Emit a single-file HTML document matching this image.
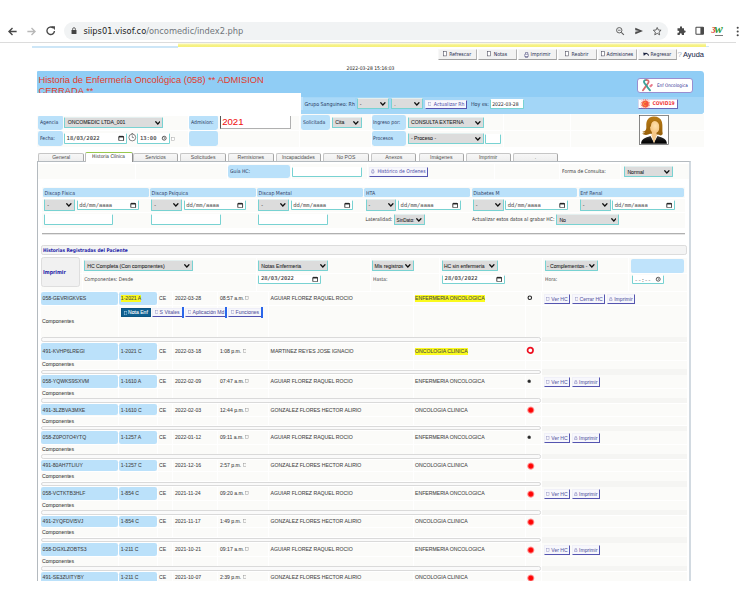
<!DOCTYPE html>
<html lang="es">
<head>
<meta charset="utf-8">
<title>Historia de Enfermería Oncológica</title>
<style>
html,body{margin:0;padding:0;background:#fff;}
body{width:750px;height:600px;overflow:hidden;position:relative;}
#pg{position:absolute;left:0;top:0;width:750px;height:600px;overflow:hidden;background:#fff;}
#pg div,#pg span,#pg svg{position:absolute;box-sizing:border-box;}
#pg span{white-space:pre;}
.dv{font-family:"DejaVu Sans","Liberation Sans",sans-serif;transform:scaleY(1.15);transform-origin:0 72%;}
.ls{font-family:"Liberation Sans",sans-serif;-webkit-text-stroke:0.06px;}
.mo{font-family:"DejaVu Sans Mono","Liberation Mono",monospace;-webkit-text-stroke:0.08px;}
.sel{background:#dcdcdc;border:1px solid #78d2d2;border-top-color:#e4efef;border-radius:1px;overflow:hidden;}
.inp{background:#fff;border:1px solid #78d2d2;border-top-color:transparent;border-radius:1px;overflow:hidden;}
.chev{right:1.9px;top:50%;width:5.7px;height:3.9px;margin-top:-1.7px;}
.cal{right:1.6px;top:50%;width:6.4px;height:6.4px;margin-top:-3.5px;}
.pbtn{background:#f7f7fc;border:1px solid #f0f0f8;border-right:1.1px solid #5555b0;border-bottom:1.1px solid #5555b0;}
.bbtn{background:#f6f6fb;border:1px solid #eeeef8;border-right:1.7px solid #2a68e6;border-bottom:1px solid #5050b0;}
.gbtn{background:#f2f2f2;border:1px solid #f8f8f8;border-right:1px solid #b4b4b4;border-bottom:1.3px solid #a0a0a0;}
.tab{background:linear-gradient(#f7f7f7,#ededed);border:1px solid #c6c6c6;border-right-color:#a6a6a6;border-bottom:none;border-radius:2px 2px 0 0;}
.cell{background:#fbfbf9;}
</style>
</head>
<body>
<div id="pg">
<div style="left:64.00px;top:21.60px;width:604.00px;height:18.60px;background:#f1f3f4;border-radius:9.3px"></div>
<div style="left:0.00px;top:42.00px;width:736.00px;height:1.00px;background:#dcdcdc"></div>
<svg style="left:7.4px;top:25.5px;width:11px;height:11px" viewBox="0 0 20 20"><path d="M17.5 10H4M10 3.6L3.6 10L10 16.4" fill="none" stroke="#474747" stroke-width="2.5"/></svg>
<svg style="left:26px;top:25.5px;width:11px;height:11px" viewBox="0 0 20 20"><path d="M2.5 10H16M10 3.6L16.4 10L10 16.4" fill="none" stroke="#b8b8b8" stroke-width="2.5"/></svg>
<svg style="left:44.6px;top:25.2px;width:11.4px;height:11.4px" viewBox="0 0 20 20"><path d="M16.6 10.6A6.6 6.6 0 1 1 14.2 5" fill="none" stroke="#474747" stroke-width="2.4"/><path d="M11 2.2H17.4V8.6Z" fill="#474747"/></svg>
<svg style="left:71px;top:27px;width:6px;height:7.4px" viewBox="0 0 12 15"><rect x="1" y="6" width="10" height="8.4" rx="1" fill="#444"/><path d="M3.2 6V4.2a2.8 2.8 0 0 1 5.6 0V6" fill="none" stroke="#444" stroke-width="1.6"/></svg>
<span class="dv" style="-webkit-text-stroke:0;transform:none;left:83.4px;top:26.1px;font-size:8.29px;line-height:11px;color:#222">siips01.visof.co<span style="position:static;color:#70757a">/oncomedic/index2.php</span></span>
<svg style="left:615px;top:26px;width:10px;height:10px" viewBox="0 0 20 20"><circle cx="8.5" cy="8.5" r="5.4" fill="none" stroke="#5c5c5c" stroke-width="1.9"/><path d="M12.6 12.6L17.8 17.8" stroke="#5c5c5c" stroke-width="2.2"/><path d="M5.8 8.5H11.2" stroke="#5c5c5c" stroke-width="1.6"/></svg>
<svg style="left:633.6px;top:26px;width:10px;height:10px" viewBox="0 0 20 20"><path d="M2.5 3.5L18 10L2.5 16.5L2.5 11.6L10.5 10L2.5 8.4Z" fill="#4a4a4a"/></svg>
<svg style="left:652.4px;top:25.6px;width:10.4px;height:10.4px" viewBox="0 0 20 20"><path d="M10 2.8L12.2 7.7L17.5 8.2L13.5 11.8L14.7 17L10 14.2L5.3 17L6.5 11.8L2.5 8.2L7.8 7.7Z" fill="none" stroke="#4a4a4a" stroke-width="1.6" stroke-linejoin="round"/></svg>
<svg style="left:676.4px;top:26px;width:10px;height:10px" viewBox="0 0 20 20"><path d="M8 2.5a2 2 0 0 1 4 0V4.5H16V9h1.2a2.2 2.2 0 0 1 0 4.4H16V18H11.6V16.6a2 2 0 0 0-4 0V18H3V13.4H4.4a2 2 0 0 0 0-4H3V4.5H8Z" fill="#4a4a4a"/></svg>
<svg style="left:694.6px;top:26.4px;width:9.4px;height:9.4px" viewBox="0 0 20 20"><rect x="2" y="2.5" width="16" height="15" rx="1" fill="none" stroke="#4a4a4a" stroke-width="2.2"/><rect x="11.5" y="2.5" width="6.5" height="15" fill="#4a4a4a"/></svg>
<span style="left:711.4px;top:22.6px;font-family:'Liberation Serif',serif;font-style:italic;font-weight:bold;font-size:8px;line-height:12px;color:#d8302c">3<span style="position:static;font-size:12.4px;color:#2f9a3c;margin-left:-0.8px">w</span></span>
<div style="left:714.80px;top:34.60px;width:8.00px;height:0.90px;background:#7a7a7a"></div>
<svg style="left:735.6px;top:25.6px;width:3.4px;height:11px" viewBox="0 0 6.8 22"><circle cx="3.4" cy="3.4" r="2.1" fill="#474747"/><circle cx="3.4" cy="11" r="2.1" fill="#474747"/><circle cx="3.4" cy="18.6" r="2.1" fill="#474747"/></svg>
<div style="left:32.00px;top:46.20px;width:146.00px;height:1.50px;background:#cde6f7"></div>
<div style="left:177.60px;top:42.80px;width:528.60px;height:4.60px;background:linear-gradient(#fdfde6,#fbf9c4 26%,#f6f288 44%,#f5f07a)"></div>
<div style="left:706.00px;top:46.00px;width:3.40px;height:1.40px;background:#cfe6f6"></div>
<div class="gbtn" style="left:438px;top:48.8px;width:38.6px;height:10.8px;"><svg style="left:4.2px;top:1.6px;width:4px;height:5.4px" viewBox="0 0 8 11"><rect x="1" y="1" width="6" height="9" fill="#fff" stroke="#445" stroke-width="1.1"/></svg><span class="dv" style="left:10.2px;top:0;line-height:10.6px;font-size:4.65px;color:#1c2b4d">Refrescar</span></div>
<div class="gbtn" style="left:478px;top:48.8px;width:38.6px;height:10.8px;"><svg style="left:8.4px;top:1.6px;width:4px;height:5.4px" viewBox="0 0 8 11"><rect x="1" y="1" width="6" height="9" fill="#fff" stroke="#445" stroke-width="1.1"/></svg><span class="dv" style="left:14.7px;top:0;line-height:10.6px;font-size:4.65px;color:#1c2b4d">Notas</span></div>
<div class="gbtn" style="left:518px;top:48.8px;width:38.6px;height:10.8px;"><svg style="left:5.2px;top:1.8px;width:5px;height:6px" viewBox="0 0 10 12"><path d="M3 4V1H7.5V4M1.5 9V4.5H8.5V9H1.5ZM3 9V11H7V9" fill="#fff" stroke="#447" stroke-width="1.1"/></svg><span class="dv" style="left:11.6px;top:0;line-height:10.6px;font-size:4.65px;color:#1c2b4d">Imprimir</span></div>
<div class="gbtn" style="left:558px;top:48.8px;width:38.6px;height:10.8px;"><svg style="left:6px;top:1.6px;width:4px;height:5.4px" viewBox="0 0 8 11"><rect x="1" y="1" width="6" height="9" fill="#fff" stroke="#445" stroke-width="1.1"/></svg><span class="dv" style="left:12.6px;top:0;line-height:10.6px;font-size:4.65px;color:#1c2b4d">Reabrir</span></div>
<div class="gbtn" style="left:598px;top:48.8px;width:38.6px;height:10.8px;"><svg style="left:1.7px;top:1.6px;width:4px;height:5.4px" viewBox="0 0 8 11"><rect x="1" y="1" width="6" height="9" fill="#fff" stroke="#445" stroke-width="1.1"/></svg><span class="dv" style="left:7.6px;top:0;line-height:10.6px;font-size:4.65px;color:#1c2b4d">Admisiones</span></div>
<div class="gbtn" style="left:638px;top:48.8px;width:38.6px;height:10.8px;"><svg style="left:3.8px;top:1.8px;width:6.4px;height:5.2px" viewBox="0 0 12.8 10.4"><path d="M3 5C5 1.8 9.6 2 11.4 7.4" fill="none" stroke="#1c2440" stroke-width="2.3"/><path d="M0.4 1.2L6.4 2.6L1.6 8Z" fill="#1c2440"/></svg><span class="dv" style="left:11.6px;top:0;line-height:10.6px;font-size:4.65px;color:#1c2b4d">Regresar</span></div>
<span class="ls" style="left:677.40px;top:49.50px;font-size:7.8px;line-height:10px;color:#a9b9cc;font-weight:normal;">?</span>
<span class="ls" style="left:683.00px;top:49.50px;font-size:7.45px;line-height:10px;color:#1c2b4d;font-weight:normal;">Ayuda</span>
<span class="dv" style="left:346.60px;top:65.50px;font-size:4.5px;line-height:6px;color:#222;font-weight:normal;">2022-03-28 15:16:03</span>
<div style="left:37.40px;top:71.00px;width:666.80px;height:42.80px;background:#90cdf5;border-radius:1px 3.4px 3.4px 1px"></div>
<div style="left:301.40px;top:97.30px;width:402.80px;height:16.50px;background:#a3d6f7;border-radius:0 0 3.4px 0"></div>
<div style="left:303.00px;top:97.50px;width:52.40px;height:12.40px;background:#aad9f8"></div>
<div style="left:301.20px;top:97.30px;width:1.60px;height:12.60px;background:#bde1fa"></div>
<div style="left:37.4px;top:71px;width:300px;height:21.6px;overflow:hidden"><span class="ls" style="-webkit-text-stroke:0;left:1px;top:3.6px;font-size:9.35px;line-height:11.1px;color:#e23c2c;white-space:pre">Historia de Enfermería Oncológica (058) ** ADMISION
CERRADA **</span></div>
<div style="left:36.00px;top:92.60px;width:265.40px;height:21.40px;background:#fff"></div>
<span class="dv" style="left:304.60px;top:101.50px;font-size:4.73px;line-height:6px;color:#26375c;font-weight:normal;">Grupo Sanguineo: Rh</span>
<div class="sel" style="left:356.60px;top:98.40px;width:32.00px;height:11.00px;"><span class="ls" style="left:2.2px;top:1.50px;line-height:7px;font-size:5.15px;color:#222">-</span><svg class="chev" viewBox="0 0 10 6.8"><path d="M1.3 1.3 L5 5.2 L8.7 1.3" fill="none" stroke="#111" stroke-width="2.2" stroke-linecap="round" stroke-linejoin="miter"/></svg></div>
<div class="sel" style="left:391.00px;top:98.40px;width:32.00px;height:11.00px;"><span class="ls" style="left:2.2px;top:1.50px;line-height:7px;font-size:5.15px;color:#222">.</span><svg class="chev" viewBox="0 0 10 6.8"><path d="M1.3 1.3 L5 5.2 L8.7 1.3" fill="none" stroke="#111" stroke-width="2.2" stroke-linecap="round" stroke-linejoin="miter"/></svg></div>
<div class="pbtn" style="left:425.00px;top:99.60px;width:41.80px;height:9.20px;"><span class="dv" style="left:7.8px;top:0.00px;line-height:7px;font-size:4.68px;color:#4a4aa6">Actualizar Rh</span></div>
<svg style="left:428px;top:101.8px;width:3.4px;height:4.4px" viewBox="0 0 6.8 8.8"><rect x="0.7" y="1.3" width="5.4" height="6.2" fill="none" stroke="#9090c0" stroke-width="0.9"/></svg>
<span class="dv" style="left:471.00px;top:101.50px;font-size:4.8px;line-height:6px;color:#26375c;font-weight:normal;">Hoy es:</span>
<div class="inp" style="left:490.40px;top:98.60px;width:33.40px;height:10.20px;"></div>
<span class="dv" style="left:492.20px;top:101.50px;font-size:4.55px;line-height:6px;color:#222;font-weight:normal;">2022-03-28</span>
<div style="left:637.40px;top:78.00px;width:55.80px;height:15.20px;background:#fff;border:0.6px solid #9a8fd0;border-radius:3px"></div>
<svg style="left:640.6px;top:79.4px;width:13.6px;height:12.4px" viewBox="0 0 27 25"><path d="M10.5 2.2C6 1.5 4.5 5 7 8.5C10 13 14 18 18 23" stroke="#3aa39a" stroke-width="3.6" fill="none" stroke-linecap="round"/><path d="M10.5 2.2C15 1.5 16.5 5 14 8.5C11 13 7 18 3.5 23" stroke="#d96a6a" stroke-width="3.4" fill="none" stroke-linecap="round"/><path d="M9.2 10.6L12.8 15.6" stroke="#3aa39a" stroke-width="3.6" fill="none"/><path d="M19 11.5C20.5 9 23.5 9.5 23.5 12C23.5 14 21 15.5 19 17C18 15 17.5 13 19 11.5Z" fill="#e8788a"/><path d="M17 12L20 14L17 16Z" fill="#e8788a"/></svg>
<span class="dv" style="left:657.00px;top:82.50px;font-size:4.14px;line-height:6px;color:#2a2a90;font-weight:normal;">Enf Oncologica</span>
<div style="left:638.00px;top:98.60px;width:39.60px;height:10.20px;background:#fff;border:0.6px solid #d8d8ee;border-right:1px solid #6a6ab8;border-bottom:1px solid #6a6ab8"></div>
<svg style="left:639.6px;top:98.8px;width:10.8px;height:10px" viewBox="0 0 22 20"><g stroke="#f4624a" stroke-width="1.5" stroke-linecap="round"><path d="M11 0.8V19.2M1.8 10H20.2M4.4 3.4L17.6 16.6M17.6 3.4L4.4 16.6M7.4 1.4L14.6 18.6M14.6 1.4L7.4 18.6M2.4 6.4L19.6 13.6M19.6 6.4L2.4 13.6"/></g><circle cx="11" cy="10" r="6.6" fill="#f4523c"/><path d="M12.6 6.6A3.8 3.8 0 1 0 12.6 13.4" fill="none" stroke="#f9a03a" stroke-width="2"/></svg>
<span class="dv" style="left:652.40px;top:100.50px;font-size:4.55px;line-height:6px;color:#f03a3a;font-weight:bold;">COVID19</span>
<div style="left:37.40px;top:113.80px;width:666.80px;height:33.00px;background:#fbfbf9"></div>
<div style="left:188.20px;top:113.80px;width:0.80px;height:33.00px;background:#fff"></div>
<div style="left:299.20px;top:113.80px;width:0.80px;height:33.00px;background:#fff"></div>
<div style="left:370.80px;top:113.80px;width:0.80px;height:33.00px;background:#fff"></div>
<div style="left:502.60px;top:113.80px;width:0.80px;height:33.00px;background:#fff"></div>
<div style="left:569.60px;top:113.80px;width:0.80px;height:33.00px;background:#fff"></div>
<div style="left:37.40px;top:130.20px;width:666.80px;height:0.80px;background:#fff"></div>
<div style="left:37.60px;top:115.40px;width:25.00px;height:14.40px;background:#bae1fa;border-radius:2.4px"></div>
<span class="dv" style="left:40.00px;top:119.50px;font-size:4.55px;line-height:6px;color:#26375c;font-weight:normal;">Agencia</span>
<div class="sel" style="left:64.00px;top:117.00px;width:99.20px;height:10.80px;"><span class="ls" style="left:2.8px;top:0.50px;line-height:7px;font-size:5.15px;color:#222">ONCOMEDIC LTDA_001</span><svg class="chev" viewBox="0 0 10 6.8"><path d="M1.3 1.3 L5 5.2 L8.7 1.3" fill="none" stroke="#111" stroke-width="2.2" stroke-linecap="round" stroke-linejoin="miter"/></svg></div>
<div style="left:37.60px;top:131.00px;width:25.00px;height:15.30px;background:#bae1fa;border-radius:2.4px"></div>
<span class="dv" style="left:40.00px;top:135.50px;font-size:4.55px;line-height:6px;color:#26375c;font-weight:normal;">Fecha:</span>
<div class="inp" style="left:64.00px;top:133.40px;width:63.20px;height:10.20px;"><span class="mo" style="left:1.6px;top:0.50px;line-height:7px;font-size:5.48px;color:#333;letter-spacing:0px">18/03/2022</span><svg class="cal" viewBox="0 0 12 12"><rect x="1.5" y="2.5" width="9" height="8.5" rx="1.2" fill="#fff" stroke="#222" stroke-width="1.6"/><rect x="1.5" y="2" width="9" height="2.6" fill="#222"/></svg></div>
<svg style="left:128.2px;top:133px;width:8.6px;height:8.6px" viewBox="0 0 16 16"><circle cx="8" cy="8.4" r="6.3" fill="#fff" stroke="#444" stroke-width="1.2"/><path d="M8 4.4V8.6H11.2" fill="none" stroke="#444" stroke-width="1.1"/><path d="M6.4 1H9.6" stroke="#444" stroke-width="1.2"/></svg>
<div class="inp" style="left:137.40px;top:133.40px;width:32.40px;height:10.20px;"><span class="mo" style="left:1.6px;top:0.50px;line-height:7px;font-size:5.48px;color:#333;letter-spacing:0px">13:00</span><svg class="cal" viewBox="0 0 12 12"><circle cx="6" cy="6" r="3.7" fill="#fff" stroke="#333" stroke-width="1.5"/><path d="M6 3.8V6.2L7.4 7" fill="none" stroke="#333" stroke-width="1.1"/></svg></div>
<svg style="left:170.8px;top:136.8px;width:4.2px;height:4.2px" viewBox="0 0 8.4 8.4"><rect x="0.9" y="0.9" width="6.6" height="6.6" fill="#fff" stroke="#a4a4a4" stroke-width="1"/></svg>
<div style="left:189.00px;top:115.40px;width:29.40px;height:14.40px;background:#bae1fa;border-radius:2.4px"></div>
<span class="dv" style="left:191.00px;top:119.50px;font-size:4.55px;line-height:6px;color:#26375c;font-weight:normal;">Admision:</span>
<div style="left:220px;top:115.2px;width:71.4px;height:13.4px;background:#fff;border:1px solid #b0b0b0;border-left-color:#555;border-top:none;"></div>
<span class="ls" style="left:222.20px;top:115.50px;font-size:9.6px;line-height:12px;color:#f01010;font-weight:normal;">2021</span>
<div style="left:189.00px;top:131.00px;width:29.40px;height:15.30px;background:#bae1fa;border-radius:2.4px"></div>
<div style="left:301.20px;top:115.40px;width:28.60px;height:14.40px;background:#bae1fa;border-radius:2.4px"></div>
<span class="dv" style="left:303.00px;top:119.50px;font-size:4.55px;line-height:6px;color:#26375c;font-weight:normal;">Solicitada</span>
<div class="sel" style="left:331.60px;top:117.00px;width:30.20px;height:10.80px;"><span class="ls" style="left:2.6px;top:0.50px;line-height:7px;font-size:5.15px;color:#222">Cita</span><svg class="chev" viewBox="0 0 10 6.8"><path d="M1.3 1.3 L5 5.2 L8.7 1.3" fill="none" stroke="#111" stroke-width="2.2" stroke-linecap="round" stroke-linejoin="miter"/></svg></div>
<div style="left:371.60px;top:115.40px;width:34.00px;height:14.40px;background:#bae1fa;border-radius:2.4px"></div>
<span class="dv" style="left:373.00px;top:119.50px;font-size:4.55px;line-height:6px;color:#26375c;font-weight:normal;">Ingreso por:</span>
<div class="sel" style="left:407.60px;top:117.00px;width:76.00px;height:10.80px;"><span class="ls" style="left:2.4px;top:0.50px;line-height:7px;font-size:5.15px;color:#222">CONSULTA EXTERNA</span><svg class="chev" viewBox="0 0 10 6.8"><path d="M1.3 1.3 L5 5.2 L8.7 1.3" fill="none" stroke="#111" stroke-width="2.2" stroke-linecap="round" stroke-linejoin="miter"/></svg></div>
<div style="left:371.60px;top:131.00px;width:34.00px;height:15.30px;background:#bae1fa;border-radius:2.4px"></div>
<span class="dv" style="left:373.00px;top:135.50px;font-size:4.55px;line-height:6px;color:#26375c;font-weight:normal;">Procesos</span>
<div class="sel" style="left:407.60px;top:133.40px;width:76.00px;height:10.40px;"><span class="ls" style="left:2.4px;top:0.50px;line-height:7px;font-size:5.15px;color:#222">- Proceso -</span><svg class="chev" viewBox="0 0 10 6.8"><path d="M1.3 1.3 L5 5.2 L8.7 1.3" fill="none" stroke="#111" stroke-width="2.2" stroke-linecap="round" stroke-linejoin="miter"/></svg></div>
<div class="inp" style="left:485.40px;top:134.00px;width:15.40px;height:9.80px;"></div>
<div style="left:36.00px;top:113.00px;width:265.40px;height:3.00px;background:#fff"></div>
<svg style="left:639px;top:115px;width:30px;height:29.8px" viewBox="0 0 60 60"><defs><linearGradient id="hg" x1="0" y1="0" x2="0" y2="1"><stop offset="0" stop-color="#b87a14"/><stop offset="1" stop-color="#96600c"/></linearGradient><radialGradient id="fg" cx="0.55" cy="0.4" r="0.7"><stop offset="0" stop-color="#ffe2ae"/><stop offset="1" stop-color="#f2be78"/></radialGradient><linearGradient id="jg" x1="0" y1="0" x2="0" y2="1"><stop offset="0" stop-color="#3a3a3a"/><stop offset="0.6" stop-color="#0c0c0c"/><stop offset="1" stop-color="#000"/></linearGradient></defs><rect x="0.6" y="0.6" width="58.8" height="58.8" fill="#fff" stroke="#444" stroke-width="1.3"/><path d="M30 3.2C19 3 14 11 14.5 22C15 30 13 33 6.5 33.5C8 35 10 35.5 12 35C10 37 8 37.5 6 37C9 41 17 41 22 38L40 40C44 42 46.5 41 47.5 38C46 30 48 22 46 14C44 7 38 3.2 30 3.2Z" fill="url(#hg)"/><path d="M4 58C4 49 12 46 23 42.5L30 56L37 42.5C48 46 56 49 56 58Z" fill="url(#jg)"/><path d="M25 41L30 57.5L35.5 41L34.5 33H26Z" fill="#f4c88a"/><ellipse cx="31.5" cy="24.5" rx="9.4" ry="12.4" fill="url(#fg)"/><path d="M21 26C19 16 24 8 34 8C27.5 11 24 16 24 21C23 23 22 25 21 26Z" fill="url(#hg)"/><path d="M41 22C42 16 39 10 34 8C40 8 45 13 44.5 22C44 28 43 32 43.5 37C42 33 40.5 27 41 22Z" fill="url(#hg)"/></svg>
<div class="tab" style="left:38.4px;top:153.4px;width:45.6px;height:8.4px"><span class="ls" style="left:0;top:-0.5px;width:43.6px;text-align:center;font-size:5.1px;line-height:7.6px;color:#505050;-webkit-text-stroke:0">General</span></div>
<div class="tab" style="left:133px;top:153.4px;width:45px;height:8.4px"><span class="ls" style="left:0;top:-0.5px;width:43px;text-align:center;font-size:5.1px;line-height:7.6px;color:#505050;-webkit-text-stroke:0">Servicios</span></div>
<div class="tab" style="left:180.4px;top:153.4px;width:45.6px;height:8.4px"><span class="ls" style="left:0;top:-0.5px;width:43.6px;text-align:center;font-size:5.1px;line-height:7.6px;color:#505050;-webkit-text-stroke:0">Solicitudes</span></div>
<div class="tab" style="left:228px;top:153.4px;width:45.6px;height:8.4px"><span class="ls" style="left:0;top:-0.5px;width:43.6px;text-align:center;font-size:5.1px;line-height:7.6px;color:#505050;-webkit-text-stroke:0">Remisiones</span></div>
<div class="tab" style="left:275.6px;top:153.4px;width:45.6px;height:8.4px"><span class="ls" style="left:0;top:-0.5px;width:43.6px;text-align:center;font-size:5.1px;line-height:7.6px;color:#505050;-webkit-text-stroke:0">Incapacidades</span></div>
<div class="tab" style="left:323px;top:153.4px;width:46px;height:8.4px"><span class="ls" style="left:0;top:-0.5px;width:44px;text-align:center;font-size:5.1px;line-height:7.6px;color:#505050;-webkit-text-stroke:0">No POS</span></div>
<div class="tab" style="left:371px;top:153.4px;width:45.4px;height:8.4px"><span class="ls" style="left:0;top:-0.5px;width:43.4px;text-align:center;font-size:5.1px;line-height:7.6px;color:#505050;-webkit-text-stroke:0">Anexos</span></div>
<div class="tab" style="left:418.6px;top:153.4px;width:45.4px;height:8.4px"><span class="ls" style="left:0;top:-0.5px;width:43.4px;text-align:center;font-size:5.1px;line-height:7.6px;color:#505050;-webkit-text-stroke:0">Imágenes</span></div>
<div class="tab" style="left:465.6px;top:153.4px;width:45px;height:8.4px"><span class="ls" style="left:0;top:-0.5px;width:43px;text-align:center;font-size:5.1px;line-height:7.6px;color:#505050;-webkit-text-stroke:0">Imprimir</span></div>
<div class="tab" style="left:512.6px;top:153.4px;width:45.6px;height:8.4px"><span class="ls" style="left:0;top:-0.5px;width:43.6px;text-align:center;font-size:5.1px;line-height:7.6px;color:#505050;-webkit-text-stroke:0">.</span></div>
<div style="left:37.00px;top:161.20px;width:654.00px;height:440.00px;background:#fff;border:1px solid #b4babf;border-right:2px solid #d2dae1"></div>
<div style="left:84.6px;top:151.8px;width:48.2px;height:10.6px;background:#fff;border:1px solid #bdbdbd;border-right-color:#8e8e8e;border-bottom:none;border-top:1.7px solid #98c84e;border-radius:2px 2px 0 0"><span class="dv" style="left:0;top:0.2px;width:46px;text-align:center;font-size:4.4px;line-height:7.4px;color:#222">Historia Clínica</span></div>
<div style="left:38.00px;top:163.60px;width:651.00px;height:15.60px;background:#fbfbf9"></div>
<div style="left:134.60px;top:163.60px;width:0.80px;height:15.60px;background:#fff"></div>
<div style="left:227.00px;top:163.60px;width:0.80px;height:15.60px;background:#fff"></div>
<div style="left:291.00px;top:163.60px;width:0.80px;height:15.60px;background:#fff"></div>
<div style="left:367.40px;top:163.60px;width:0.80px;height:15.60px;background:#fff"></div>
<div style="left:493.60px;top:163.60px;width:0.80px;height:15.60px;background:#fff"></div>
<div style="left:558.60px;top:163.60px;width:0.80px;height:15.60px;background:#fff"></div>
<div style="left:620.00px;top:163.60px;width:0.80px;height:15.60px;background:#fff"></div>
<div style="left:228.00px;top:164.60px;width:62.00px;height:13.80px;background:#bae1fa;border-radius:2.4px"></div>
<span class="dv" style="left:230.00px;top:168.50px;font-size:4.55px;line-height:6px;color:#26375c;font-weight:normal;">Guía HC:</span>
<div class="inp" style="left:292.00px;top:167.00px;width:69.80px;height:9.80px;"></div>
<div class="pbtn" style="left:369.00px;top:167.00px;width:58.80px;height:9.80px;"><span class="dv" style="left:7.4px;top:0.00px;line-height:7px;font-size:4.6px;color:#4a4aa6">Histórico de Ordenes</span></div>
<svg style="left:371.2px;top:169.4px;width:3.6px;height:4.6px" viewBox="0 0 7.2 9.2"><path d="M2.2 3.6V1H5V3.6M1 7.4V3.8H6.2V7.4ZM2.2 7.4V8.4H5V7.4" fill="none" stroke="#8080bc" stroke-width="0.9"/></svg>
<span class="dv" style="left:562.00px;top:168.50px;font-size:4.5px;line-height:6px;color:#333;font-weight:normal;">Forma de Consulta:</span>
<div class="sel" style="left:624.00px;top:166.30px;width:48.80px;height:10.90px;"><span class="ls" style="left:2.4px;top:1.50px;line-height:7px;font-size:5.15px;color:#222">Normal</span><svg class="chev" viewBox="0 0 10 6.8"><path d="M1.3 1.3 L5 5.2 L8.7 1.3" fill="none" stroke="#111" stroke-width="2.2" stroke-linecap="round" stroke-linejoin="miter"/></svg></div>
<div style="left:42.00px;top:187.00px;width:643.00px;height:41.00px;background:#fbfbf9"></div>
<div style="left:43.00px;top:188.00px;width:106.00px;height:9.20px;background:#bae1fa;border-radius:1.6px"></div>
<span class="dv" style="left:44.60px;top:190.50px;font-size:4.7px;line-height:6px;color:#33466a;font-weight:normal;">Discap Física</span>
<div class="sel" style="left:44.20px;top:199.40px;width:30.80px;height:11.20px;"><span class="ls" style="left:2px;top:1.50px;line-height:7px;font-size:5.15px;color:#222">-</span><svg class="chev" viewBox="0 0 10 6.8"><path d="M1.3 1.3 L5 5.2 L8.7 1.3" fill="none" stroke="#111" stroke-width="2.2" stroke-linecap="round" stroke-linejoin="miter"/></svg></div>
<div class="inp" style="left:76.60px;top:200.40px;width:62.60px;height:9.40px;"><span class="mo" style="left:1.6px;top:0.50px;line-height:7px;font-size:5.48px;color:#666;letter-spacing:0px">dd/mm/aaaa</span><svg class="cal" viewBox="0 0 12 12"><rect x="1.5" y="2.5" width="9" height="8.5" rx="1.2" fill="#fff" stroke="#222" stroke-width="1.6"/><rect x="1.5" y="2" width="9" height="2.6" fill="#222"/></svg></div>
<div style="left:150.00px;top:188.00px;width:105.60px;height:9.20px;background:#bae1fa;border-radius:1.6px"></div>
<span class="dv" style="left:151.60px;top:190.50px;font-size:4.7px;line-height:6px;color:#33466a;font-weight:normal;">Discap Psíquica</span>
<div class="sel" style="left:151.20px;top:199.40px;width:30.80px;height:11.20px;"><span class="ls" style="left:2px;top:1.50px;line-height:7px;font-size:5.15px;color:#222">-</span><svg class="chev" viewBox="0 0 10 6.8"><path d="M1.3 1.3 L5 5.2 L8.7 1.3" fill="none" stroke="#111" stroke-width="2.2" stroke-linecap="round" stroke-linejoin="miter"/></svg></div>
<div class="inp" style="left:183.60px;top:200.40px;width:62.60px;height:9.40px;"><span class="mo" style="left:1.6px;top:0.50px;line-height:7px;font-size:5.48px;color:#666;letter-spacing:0px">dd/mm/aaaa</span><svg class="cal" viewBox="0 0 12 12"><rect x="1.5" y="2.5" width="9" height="8.5" rx="1.2" fill="#fff" stroke="#222" stroke-width="1.6"/><rect x="1.5" y="2" width="9" height="2.6" fill="#222"/></svg></div>
<div style="left:257.00px;top:188.00px;width:105.60px;height:9.20px;background:#bae1fa;border-radius:1.6px"></div>
<span class="dv" style="left:258.60px;top:190.50px;font-size:4.7px;line-height:6px;color:#33466a;font-weight:normal;">Discap Mental</span>
<div class="sel" style="left:258.20px;top:199.40px;width:30.80px;height:11.20px;"><span class="ls" style="left:2px;top:1.50px;line-height:7px;font-size:5.15px;color:#222">-</span><svg class="chev" viewBox="0 0 10 6.8"><path d="M1.3 1.3 L5 5.2 L8.7 1.3" fill="none" stroke="#111" stroke-width="2.2" stroke-linecap="round" stroke-linejoin="miter"/></svg></div>
<div class="inp" style="left:290.60px;top:200.40px;width:62.60px;height:9.40px;"><span class="mo" style="left:1.6px;top:0.50px;line-height:7px;font-size:5.48px;color:#666;letter-spacing:0px">dd/mm/aaaa</span><svg class="cal" viewBox="0 0 12 12"><rect x="1.5" y="2.5" width="9" height="8.5" rx="1.2" fill="#fff" stroke="#222" stroke-width="1.6"/><rect x="1.5" y="2" width="9" height="2.6" fill="#222"/></svg></div>
<div style="left:364.40px;top:188.00px;width:105.20px;height:9.20px;background:#bae1fa;border-radius:1.6px"></div>
<span class="dv" style="left:366.00px;top:190.50px;font-size:4.7px;line-height:6px;color:#33466a;font-weight:normal;">HTA</span>
<div class="sel" style="left:365.60px;top:199.40px;width:30.80px;height:11.20px;"><span class="ls" style="left:2px;top:1.50px;line-height:7px;font-size:5.15px;color:#222">-</span><svg class="chev" viewBox="0 0 10 6.8"><path d="M1.3 1.3 L5 5.2 L8.7 1.3" fill="none" stroke="#111" stroke-width="2.2" stroke-linecap="round" stroke-linejoin="miter"/></svg></div>
<div class="inp" style="left:398.00px;top:200.40px;width:62.60px;height:9.40px;"><span class="mo" style="left:1.6px;top:0.50px;line-height:7px;font-size:5.48px;color:#666;letter-spacing:0px">dd/mm/aaaa</span><svg class="cal" viewBox="0 0 12 12"><rect x="1.5" y="2.5" width="9" height="8.5" rx="1.2" fill="#fff" stroke="#222" stroke-width="1.6"/><rect x="1.5" y="2" width="9" height="2.6" fill="#222"/></svg></div>
<div style="left:471.60px;top:188.00px;width:105.00px;height:9.20px;background:#bae1fa;border-radius:1.6px"></div>
<span class="dv" style="left:473.20px;top:190.50px;font-size:4.7px;line-height:6px;color:#33466a;font-weight:normal;">Diabetes M</span>
<div class="sel" style="left:472.80px;top:199.40px;width:30.80px;height:11.20px;"><span class="ls" style="left:2px;top:1.50px;line-height:7px;font-size:5.15px;color:#222">-</span><svg class="chev" viewBox="0 0 10 6.8"><path d="M1.3 1.3 L5 5.2 L8.7 1.3" fill="none" stroke="#111" stroke-width="2.2" stroke-linecap="round" stroke-linejoin="miter"/></svg></div>
<div class="inp" style="left:505.20px;top:200.40px;width:62.60px;height:9.40px;"><span class="mo" style="left:1.6px;top:0.50px;line-height:7px;font-size:5.48px;color:#666;letter-spacing:0px">dd/mm/aaaa</span><svg class="cal" viewBox="0 0 12 12"><rect x="1.5" y="2.5" width="9" height="8.5" rx="1.2" fill="#fff" stroke="#222" stroke-width="1.6"/><rect x="1.5" y="2" width="9" height="2.6" fill="#222"/></svg></div>
<div style="left:578.60px;top:188.00px;width:105.40px;height:9.20px;background:#bae1fa;border-radius:1.6px"></div>
<span class="dv" style="left:580.20px;top:190.50px;font-size:4.7px;line-height:6px;color:#33466a;font-weight:normal;">Enf Renal</span>
<div class="sel" style="left:579.80px;top:199.40px;width:30.80px;height:11.20px;"><span class="ls" style="left:2px;top:1.50px;line-height:7px;font-size:5.15px;color:#222">-</span><svg class="chev" viewBox="0 0 10 6.8"><path d="M1.3 1.3 L5 5.2 L8.7 1.3" fill="none" stroke="#111" stroke-width="2.2" stroke-linecap="round" stroke-linejoin="miter"/></svg></div>
<div class="inp" style="left:612.20px;top:200.40px;width:62.60px;height:9.40px;"><span class="mo" style="left:1.6px;top:0.50px;line-height:7px;font-size:5.48px;color:#666;letter-spacing:0px">dd/mm/aaaa</span><svg class="cal" viewBox="0 0 12 12"><rect x="1.5" y="2.5" width="9" height="8.5" rx="1.2" fill="#fff" stroke="#222" stroke-width="1.6"/><rect x="1.5" y="2" width="9" height="2.6" fill="#222"/></svg></div>
<div style="left:42.00px;top:198.20px;width:643.00px;height:0.70px;background:#fff"></div>
<div style="left:42.00px;top:212.40px;width:643.00px;height:0.70px;background:#fff"></div>
<div class="inp" style="left:44.00px;top:214.40px;width:69.20px;height:10.20px;"></div>
<div class="inp" style="left:151.40px;top:214.40px;width:69.20px;height:10.20px;"></div>
<div class="inp" style="left:258.40px;top:214.40px;width:69.20px;height:10.20px;"></div>
<span class="dv" style="left:365.40px;top:216.50px;font-size:4.5px;line-height:6px;color:#333;font-weight:normal;">Lateralidad:</span>
<div class="sel" style="left:394.00px;top:214.40px;width:30.80px;height:11.00px;"><span class="ls" style="left:1.6px;top:2.00px;line-height:7px;font-size:4.6px;color:#222">SinDato:</span><svg class="chev" viewBox="0 0 10 6.8"><path d="M1.3 1.3 L5 5.2 L8.7 1.3" fill="none" stroke="#111" stroke-width="2.2" stroke-linecap="round" stroke-linejoin="miter"/></svg></div>
<span class="dv" style="left:472.00px;top:216.50px;font-size:4.6px;line-height:6px;color:#333;font-weight:normal;">Actualizar estos datos al grabar HC:</span>
<div class="sel" style="left:556.00px;top:214.40px;width:63.20px;height:11.00px;"><span class="ls" style="left:2.4px;top:1.50px;line-height:7px;font-size:5.15px;color:#222">No</span><svg class="chev" viewBox="0 0 10 6.8"><path d="M1.3 1.3 L5 5.2 L8.7 1.3" fill="none" stroke="#111" stroke-width="2.2" stroke-linecap="round" stroke-linejoin="miter"/></svg></div>
<div style="left:42.00px;top:233.30px;width:643.00px;height:0.70px;background:#b0b0b0"></div>
<div style="left:42.00px;top:234.10px;width:643.00px;height:0.60px;background:#e6e6e6"></div>
<div style="left:40.60px;top:245.30px;width:646.20px;height:10.20px;background:#f4f4f4;border:0.8px solid #dcdcdc;border-radius:2.2px"></div>
<span class="dv" style="left:43.00px;top:247.50px;font-size:4.36px;line-height:6px;color:#1d1da8;font-weight:bold;">Historias Registradas del Paciente</span>
<div style="left:40.60px;top:257.60px;width:646.00px;height:33.80px;background:#fbfbf9"></div>
<div style="left:40.60px;top:273.00px;width:646.00px;height:0.70px;background:#fff"></div>
<div style="left:81.60px;top:257.60px;width:0.80px;height:33.80px;background:#fff"></div>
<div style="left:255.60px;top:257.60px;width:0.80px;height:33.80px;background:#fff"></div>
<div style="left:369.80px;top:257.60px;width:0.80px;height:33.80px;background:#fff"></div>
<div style="left:439.40px;top:257.60px;width:0.80px;height:33.80px;background:#fff"></div>
<div style="left:541.60px;top:257.60px;width:0.80px;height:33.80px;background:#fff"></div>
<div style="left:627.60px;top:257.60px;width:0.80px;height:33.80px;background:#fff"></div>
<div style="left:40.60px;top:257.40px;width:39.60px;height:29.80px;background:#f1f1f1;border:0.8px solid #dedede;border-radius:2.6px"></div>
<span class="dv" style="left:43.00px;top:269.50px;font-size:4.7px;line-height:6px;color:#1d1da8;font-weight:bold;">Imprimir</span>
<div class="sel" style="left:84.40px;top:260.30px;width:108.20px;height:10.80px;"><span class="ls" style="left:1.8px;top:1.50px;line-height:7px;font-size:5.15px;color:#222">HC Completa (Con componentes)</span><svg class="chev" viewBox="0 0 10 6.8"><path d="M1.3 1.3 L5 5.2 L8.7 1.3" fill="none" stroke="#111" stroke-width="2.2" stroke-linecap="round" stroke-linejoin="miter"/></svg></div>
<span class="dv" style="left:84.20px;top:276.50px;font-size:4.55px;line-height:6px;color:#444;font-weight:normal;">Componentes: Desde</span>
<div class="sel" style="left:258.40px;top:260.30px;width:70.00px;height:10.80px;"><span class="ls" style="left:1.8px;top:1.50px;line-height:7px;font-size:5.15px;color:#222">Notas Enfermeria</span><svg class="chev" viewBox="0 0 10 6.8"><path d="M1.3 1.3 L5 5.2 L8.7 1.3" fill="none" stroke="#111" stroke-width="2.2" stroke-linecap="round" stroke-linejoin="miter"/></svg></div>
<div class="inp" style="left:258.40px;top:274.60px;width:62.20px;height:9.60px;"><span class="mo" style="left:1.6px;top:-0.50px;line-height:7px;font-size:5.48px;color:#333;letter-spacing:0px">28/03/2022</span><svg class="cal" viewBox="0 0 12 12"><rect x="1.5" y="2.5" width="9" height="8.5" rx="1.2" fill="#fff" stroke="#222" stroke-width="1.6"/><rect x="1.5" y="2" width="9" height="2.6" fill="#222"/></svg></div>
<div class="sel" style="left:372.40px;top:260.30px;width:41.20px;height:10.80px;"><span class="ls" style="left:1.1px;top:1.50px;line-height:7px;font-size:5.1px;color:#222">Mis registros</span><svg class="chev" viewBox="0 0 10 6.8"><path d="M1.3 1.3 L5 5.2 L8.7 1.3" fill="none" stroke="#111" stroke-width="2.2" stroke-linecap="round" stroke-linejoin="miter"/></svg></div>
<span class="dv" style="left:373.00px;top:276.50px;font-size:4.5px;line-height:6px;color:#444;font-weight:normal;">Hasta:</span>
<div class="sel" style="left:442.00px;top:260.30px;width:55.60px;height:10.80px;"><span class="ls" style="left:0.9px;top:1.50px;line-height:7px;font-size:5.05px;color:#222">HC sin enfermeria</span><svg class="chev" viewBox="0 0 10 6.8"><path d="M1.3 1.3 L5 5.2 L8.7 1.3" fill="none" stroke="#111" stroke-width="2.2" stroke-linecap="round" stroke-linejoin="miter"/></svg></div>
<div class="inp" style="left:442.00px;top:274.60px;width:62.60px;height:9.60px;"><span class="mo" style="left:1.6px;top:-0.50px;line-height:7px;font-size:5.48px;color:#333;letter-spacing:0px">28/03/2022</span><svg class="cal" viewBox="0 0 12 12"><rect x="1.5" y="2.5" width="9" height="8.5" rx="1.2" fill="#fff" stroke="#222" stroke-width="1.6"/><rect x="1.5" y="2" width="9" height="2.6" fill="#222"/></svg></div>
<div class="sel" style="left:545.00px;top:260.30px;width:52.80px;height:10.80px;"><span class="ls" style="left:0.9px;top:1.50px;line-height:7px;font-size:5.1px;color:#222">- Complementos -</span><svg class="chev" viewBox="0 0 10 6.8"><path d="M1.3 1.3 L5 5.2 L8.7 1.3" fill="none" stroke="#111" stroke-width="2.2" stroke-linecap="round" stroke-linejoin="miter"/></svg></div>
<span class="dv" style="left:545.00px;top:276.50px;font-size:4.5px;line-height:6px;color:#444;font-weight:normal;">Hora:</span>
<div style="left:630.60px;top:259.00px;width:53.60px;height:13.80px;background:#bfe3fb;border-radius:2px"></div>
<div class="inp" style="left:632.00px;top:275.00px;width:31.80px;height:9.20px;"><span class="mo" style="left:1.6px;top:0.50px;line-height:7px;font-size:5.48px;color:#666;letter-spacing:0px">--:--</span><svg class="cal" viewBox="0 0 12 12"><circle cx="6" cy="6" r="3.7" fill="#fff" stroke="#333" stroke-width="1.5"/><path d="M6 3.8V6.2L7.4 7" fill="none" stroke="#333" stroke-width="1.1"/></svg></div>
<div style="left:40.60px;top:292.40px;width:646.00px;height:44.20px;background:#fbfbf9"></div>
<div style="left:118.00px;top:292.40px;width:0.80px;height:44.20px;background:#fff"></div>
<div style="left:157.20px;top:292.40px;width:0.80px;height:44.20px;background:#fff"></div>
<div style="left:172.40px;top:292.40px;width:0.80px;height:44.20px;background:#fff"></div>
<div style="left:216.60px;top:292.40px;width:0.80px;height:44.20px;background:#fff"></div>
<div style="left:267.60px;top:292.40px;width:0.80px;height:44.20px;background:#fff"></div>
<div style="left:413.00px;top:292.40px;width:0.80px;height:44.20px;background:#fff"></div>
<div style="left:525.20px;top:292.40px;width:0.80px;height:44.20px;background:#fff"></div>
<div style="left:541.00px;top:292.40px;width:0.80px;height:44.20px;background:#fff"></div>
<div style="left:40.60px;top:305.00px;width:646.00px;height:0.70px;background:#fff"></div>
<div style="left:40.60px;top:292.40px;width:77.00px;height:12.20px;background:#bbe1fa;border-radius:2.2px"></div>
<div style="left:119.00px;top:292.40px;width:37.80px;height:12.20px;background:#bbe1fa;border-radius:2.2px"></div>
<span class="ls" style="left:42.60px;top:294.50px;font-size:5.1px;line-height:7px;color:#444;font-weight:normal;">058-GEVRIGKVES</span>
<span class="ls" style="left:120.80px;top:294.50px;font-size:5.1px;line-height:7px;color:#444;font-weight:normal;background:#fafa1e;">1-2021 A</span>
<span class="ls" style="left:159.00px;top:294.50px;font-size:5.1px;line-height:7px;color:#444;font-weight:normal;">CE</span>
<span class="ls" style="left:175.00px;top:294.50px;font-size:5.1px;line-height:7px;color:#444;font-weight:normal;">2022-03-28</span>
<span class="ls" style="left:220.00px;top:294.50px;font-size:5.1px;line-height:7px;color:#444;font-weight:normal;">08:57 a.m.<svg style="position:static;display:inline-block;width:3.6px;height:3.8px;margin-left:1.3px;vertical-align:-0.5px" viewBox="0 0 7.2 7.6"><rect x="0.9" y="0.9" width="5.4" height="5.8" fill="none" stroke="#909090" stroke-width="0.9"/></svg></span>
<span class="ls" style="left:270.60px;top:294.50px;font-size:5.15px;line-height:7px;color:#444;font-weight:normal;">AGUIAR FLOREZ RAQUEL ROCIO</span>
<span class="ls" style="left:415.00px;top:294.50px;font-size:5.15px;line-height:7px;color:#444;font-weight:normal;background:#fafa1e;">ENFERMERIA ONCOLOGICA</span>
<span class="ls" style="left:42.00px;top:317.50px;font-size:5.15px;line-height:7px;color:#444;font-weight:normal;">Componentes</span>
<svg style="left:526.6px;top:294.70px;width:6px;height:6px" viewBox="0 0 12 12"><circle cx="5.6" cy="5.4" r="3.5" fill="#fff" stroke="#222" stroke-width="2.2"/></svg>
<div class="pbtn" style="left:543.60px;top:294.00px;width:26.20px;height:9.80px;"><span class="ls" style="left:6.7px;top:0.50px;line-height:7px;font-size:5.1px;color:#6262a8">Ver HC</span></div>
<svg style="left:546.40px;top:296.60px;width:3.4px;height:4.4px" viewBox="0 0 6.8 8.8"><rect x="0.7" y="1.3" width="5.4" height="6.2" fill="none" stroke="#9090c0" stroke-width="0.9"/></svg>
<div class="pbtn" style="left:572.20px;top:294.00px;width:33.20px;height:9.80px;"><span class="ls" style="left:6.4px;top:0.50px;line-height:7px;font-size:5.1px;color:#6262a8">Cerrar HC</span></div>
<svg style="left:574.80px;top:296.60px;width:3.4px;height:4.4px" viewBox="0 0 6.8 8.8"><rect x="0.7" y="1.3" width="5.4" height="6.2" fill="none" stroke="#9090c0" stroke-width="0.9"/></svg>
<div class="pbtn" style="left:607.40px;top:294.00px;width:27.60px;height:9.80px;"><span class="ls" style="left:5.8px;top:0.50px;line-height:7px;font-size:5.1px;color:#6262a8">Imprimir</span></div>
<svg style="left:609.40px;top:296.50px;width:3.6px;height:4.6px" viewBox="0 0 7.2 9.2"><path d="M2.2 3.6V1H5V3.6M1 7.4V3.8H6.2V7.4ZM2.2 7.4V8.4H5V7.4" fill="none" stroke="#8080bc" stroke-width="0.9"/></svg>
<div style="left:541.80px;top:336.80px;width:145.00px;height:5.20px;background:#f5f5f3"></div>
<div style="left:40.60px;top:337.40px;width:500.60px;height:4.20px;background:#fafafa;border:0.8px solid #dadada;border-radius:2.2px"></div>
<div style="left:40.60px;top:343.00px;width:646.00px;height:26.20px;background:#fbfbf9"></div>
<div style="left:118.00px;top:343.00px;width:0.80px;height:26.20px;background:#fff"></div>
<div style="left:157.20px;top:343.00px;width:0.80px;height:26.20px;background:#fff"></div>
<div style="left:172.40px;top:343.00px;width:0.80px;height:26.20px;background:#fff"></div>
<div style="left:216.60px;top:343.00px;width:0.80px;height:26.20px;background:#fff"></div>
<div style="left:267.60px;top:343.00px;width:0.80px;height:26.20px;background:#fff"></div>
<div style="left:413.00px;top:343.00px;width:0.80px;height:26.20px;background:#fff"></div>
<div style="left:525.20px;top:343.00px;width:0.80px;height:26.20px;background:#fff"></div>
<div style="left:541.00px;top:343.00px;width:0.80px;height:26.20px;background:#fff"></div>
<div style="left:40.60px;top:360.00px;width:646.00px;height:0.70px;background:#fff"></div>
<div style="left:40.60px;top:343.00px;width:77.00px;height:16.60px;background:#bbe1fa;border-radius:2.2px"></div>
<div style="left:119.00px;top:343.00px;width:37.80px;height:16.60px;background:#bbe1fa;border-radius:2.2px"></div>
<span class="ls" style="left:42.60px;top:347.50px;font-size:5.1px;line-height:7px;color:#444;font-weight:normal;">491-KVHP6LREGI</span>
<span class="ls" style="left:120.80px;top:347.50px;font-size:5.1px;line-height:7px;color:#444;font-weight:normal;">1-2021 C</span>
<span class="ls" style="left:159.00px;top:347.50px;font-size:5.1px;line-height:7px;color:#444;font-weight:normal;">CE</span>
<span class="ls" style="left:175.00px;top:347.50px;font-size:5.1px;line-height:7px;color:#444;font-weight:normal;">2022-03-18</span>
<span class="ls" style="left:220.00px;top:347.50px;font-size:5.1px;line-height:7px;color:#444;font-weight:normal;">1:08 p.m.<svg style="position:static;display:inline-block;width:3.6px;height:3.8px;margin-left:1.3px;vertical-align:-0.5px" viewBox="0 0 7.2 7.6"><rect x="0.9" y="0.9" width="5.4" height="5.8" fill="none" stroke="#909090" stroke-width="0.9"/></svg></span>
<span class="ls" style="left:270.60px;top:347.50px;font-size:5.15px;line-height:7px;color:#444;font-weight:normal;">MARTINEZ REYES JOSE IGNACIO</span>
<span class="ls" style="left:415.00px;top:347.50px;font-size:5.15px;line-height:7px;color:#444;font-weight:normal;background:#fafa1e;">ONCOLOGIA CLINICA</span>
<span class="ls" style="left:42.00px;top:360.50px;font-size:5.15px;line-height:7px;color:#444;font-weight:normal;">Componentes</span>
<svg style="left:526.4px;top:346.40px;width:9px;height:9px" viewBox="0 0 18 18"><circle cx="8.6" cy="8.6" r="5.5" fill="#fff" stroke="#ee1020" stroke-width="3.4"/></svg>
<div style="left:541.80px;top:369.40px;width:145.00px;height:5.20px;background:#f5f5f3"></div>
<div style="left:40.60px;top:370.00px;width:500.60px;height:4.20px;background:#fafafa;border:0.8px solid #dadada;border-radius:2.2px"></div>
<div style="left:40.60px;top:375.40px;width:646.00px;height:22.20px;background:#fbfbf9"></div>
<div style="left:118.00px;top:375.40px;width:0.80px;height:22.20px;background:#fff"></div>
<div style="left:157.20px;top:375.40px;width:0.80px;height:22.20px;background:#fff"></div>
<div style="left:172.40px;top:375.40px;width:0.80px;height:22.20px;background:#fff"></div>
<div style="left:216.60px;top:375.40px;width:0.80px;height:22.20px;background:#fff"></div>
<div style="left:267.60px;top:375.40px;width:0.80px;height:22.20px;background:#fff"></div>
<div style="left:413.00px;top:375.40px;width:0.80px;height:22.20px;background:#fff"></div>
<div style="left:525.20px;top:375.40px;width:0.80px;height:22.20px;background:#fff"></div>
<div style="left:541.00px;top:375.40px;width:0.80px;height:22.20px;background:#fff"></div>
<div style="left:40.60px;top:388.00px;width:646.00px;height:0.70px;background:#fff"></div>
<div style="left:40.60px;top:375.40px;width:77.00px;height:12.20px;background:#bbe1fa;border-radius:2.2px"></div>
<div style="left:119.00px;top:375.40px;width:37.80px;height:12.20px;background:#bbe1fa;border-radius:2.2px"></div>
<span class="ls" style="left:42.60px;top:377.50px;font-size:5.1px;line-height:7px;color:#444;font-weight:normal;">058-YQWKS9SXVM</span>
<span class="ls" style="left:120.80px;top:377.50px;font-size:5.1px;line-height:7px;color:#444;font-weight:normal;">1-1610 A</span>
<span class="ls" style="left:159.00px;top:377.50px;font-size:5.1px;line-height:7px;color:#444;font-weight:normal;">CE</span>
<span class="ls" style="left:175.00px;top:377.50px;font-size:5.1px;line-height:7px;color:#444;font-weight:normal;">2022-02-09</span>
<span class="ls" style="left:220.00px;top:377.50px;font-size:5.1px;line-height:7px;color:#444;font-weight:normal;">07:47 a.m.<svg style="position:static;display:inline-block;width:3.6px;height:3.8px;margin-left:1.3px;vertical-align:-0.5px" viewBox="0 0 7.2 7.6"><rect x="0.9" y="0.9" width="5.4" height="5.8" fill="none" stroke="#909090" stroke-width="0.9"/></svg></span>
<span class="ls" style="left:270.60px;top:377.50px;font-size:5.15px;line-height:7px;color:#444;font-weight:normal;">AGUIAR FLOREZ RAQUEL ROCIO</span>
<span class="ls" style="left:415.00px;top:377.50px;font-size:5.15px;line-height:7px;color:#444;font-weight:normal;">ENFERMERIA ONCOLOGICA</span>
<span class="ls" style="left:42.00px;top:389.50px;font-size:5.15px;line-height:7px;color:#444;font-weight:normal;">Componentes</span>
<svg style="left:526.4px;top:378.40px;width:6.4px;height:6.4px" viewBox="0 0 12.8 12.8"><defs><radialGradient id="gd2"><stop offset="0" stop-color="#1a1a1a"/><stop offset="0.45" stop-color="#333"/><stop offset="0.8" stop-color="#9a9a9a" stop-opacity="0.8"/><stop offset="1" stop-color="#ccc" stop-opacity="0"/></radialGradient></defs><circle cx="6.4" cy="6.6" r="4.6" fill="url(#gd2)"/></svg>
<div class="pbtn" style="left:543.60px;top:377.00px;width:26.20px;height:9.80px;"><span class="ls" style="left:6.7px;top:0.50px;line-height:7px;font-size:5.1px;color:#6262a8">Ver HC</span></div>
<svg style="left:546.40px;top:379.60px;width:3.4px;height:4.4px" viewBox="0 0 6.8 8.8"><rect x="0.7" y="1.3" width="5.4" height="6.2" fill="none" stroke="#9090c0" stroke-width="0.9"/></svg>
<div class="pbtn" style="left:572.20px;top:377.00px;width:27.40px;height:9.80px;"><span class="ls" style="left:5.8px;top:0.50px;line-height:7px;font-size:5.1px;color:#6262a8">Imprimir</span></div>
<svg style="left:574.20px;top:379.50px;width:3.6px;height:4.6px" viewBox="0 0 7.2 9.2"><path d="M2.2 3.6V1H5V3.6M1 7.4V3.8H6.2V7.4ZM2.2 7.4V8.4H5V7.4" fill="none" stroke="#8080bc" stroke-width="0.9"/></svg>
<div style="left:541.80px;top:397.80px;width:145.00px;height:5.20px;background:#f5f5f3"></div>
<div style="left:40.60px;top:398.40px;width:500.60px;height:4.20px;background:#fafafa;border:0.8px solid #dadada;border-radius:2.2px"></div>
<div style="left:40.60px;top:404.00px;width:646.00px;height:21.40px;background:#fbfbf9"></div>
<div style="left:118.00px;top:404.00px;width:0.80px;height:21.40px;background:#fff"></div>
<div style="left:157.20px;top:404.00px;width:0.80px;height:21.40px;background:#fff"></div>
<div style="left:172.40px;top:404.00px;width:0.80px;height:21.40px;background:#fff"></div>
<div style="left:216.60px;top:404.00px;width:0.80px;height:21.40px;background:#fff"></div>
<div style="left:267.60px;top:404.00px;width:0.80px;height:21.40px;background:#fff"></div>
<div style="left:413.00px;top:404.00px;width:0.80px;height:21.40px;background:#fff"></div>
<div style="left:525.20px;top:404.00px;width:0.80px;height:21.40px;background:#fff"></div>
<div style="left:541.00px;top:404.00px;width:0.80px;height:21.40px;background:#fff"></div>
<div style="left:40.60px;top:415.80px;width:646.00px;height:0.70px;background:#fff"></div>
<div style="left:40.60px;top:404.00px;width:77.00px;height:11.40px;background:#bbe1fa;border-radius:2.2px"></div>
<div style="left:119.00px;top:404.00px;width:37.80px;height:11.40px;background:#bbe1fa;border-radius:2.2px"></div>
<span class="ls" style="left:42.60px;top:406.50px;font-size:5.1px;line-height:7px;color:#444;font-weight:normal;">491-3LZBVA3MXE</span>
<span class="ls" style="left:120.80px;top:406.50px;font-size:5.1px;line-height:7px;color:#444;font-weight:normal;">1-1610 C</span>
<span class="ls" style="left:159.00px;top:406.50px;font-size:5.1px;line-height:7px;color:#444;font-weight:normal;">CE</span>
<span class="ls" style="left:175.00px;top:406.50px;font-size:5.1px;line-height:7px;color:#444;font-weight:normal;">2022-02-03</span>
<span class="ls" style="left:220.00px;top:406.50px;font-size:5.1px;line-height:7px;color:#444;font-weight:normal;">12:44 p.m.<svg style="position:static;display:inline-block;width:3.6px;height:3.8px;margin-left:1.3px;vertical-align:-0.5px" viewBox="0 0 7.2 7.6"><rect x="0.9" y="0.9" width="5.4" height="5.8" fill="none" stroke="#909090" stroke-width="0.9"/></svg></span>
<span class="ls" style="left:270.60px;top:406.50px;font-size:5.15px;line-height:7px;color:#444;font-weight:normal;">GONZALEZ FLORES HECTOR ALIRIO</span>
<span class="ls" style="left:415.00px;top:406.50px;font-size:5.15px;line-height:7px;color:#444;font-weight:normal;">ONCOLOGIA CLINICA</span>
<span class="ls" style="left:42.00px;top:417.50px;font-size:5.15px;line-height:7px;color:#444;font-weight:normal;">Componentes</span>
<svg style="left:525.8px;top:405.20px;width:9.6px;height:9.6px" viewBox="0 0 19.2 19.2"><defs><radialGradient id="gr3"><stop offset="0" stop-color="#ff0000"/><stop offset="0.5" stop-color="#ff0a0a"/><stop offset="0.66" stop-color="#ff6a6a"/><stop offset="0.85" stop-color="#ffb4b4" stop-opacity="0.9"/><stop offset="1" stop-color="#ffd8d8" stop-opacity="0"/></radialGradient></defs><circle cx="9.6" cy="10.2" r="8.2" fill="url(#gr3)"/></svg>
<div style="left:541.80px;top:425.60px;width:145.00px;height:5.20px;background:#f5f5f3"></div>
<div style="left:40.60px;top:426.20px;width:500.60px;height:4.20px;background:#fafafa;border:0.8px solid #dadada;border-radius:2.2px"></div>
<div style="left:40.60px;top:431.40px;width:646.00px;height:22.20px;background:#fbfbf9"></div>
<div style="left:118.00px;top:431.40px;width:0.80px;height:22.20px;background:#fff"></div>
<div style="left:157.20px;top:431.40px;width:0.80px;height:22.20px;background:#fff"></div>
<div style="left:172.40px;top:431.40px;width:0.80px;height:22.20px;background:#fff"></div>
<div style="left:216.60px;top:431.40px;width:0.80px;height:22.20px;background:#fff"></div>
<div style="left:267.60px;top:431.40px;width:0.80px;height:22.20px;background:#fff"></div>
<div style="left:413.00px;top:431.40px;width:0.80px;height:22.20px;background:#fff"></div>
<div style="left:525.20px;top:431.40px;width:0.80px;height:22.20px;background:#fff"></div>
<div style="left:541.00px;top:431.40px;width:0.80px;height:22.20px;background:#fff"></div>
<div style="left:40.60px;top:444.00px;width:646.00px;height:0.70px;background:#fff"></div>
<div style="left:40.60px;top:431.40px;width:77.00px;height:12.20px;background:#bbe1fa;border-radius:2.2px"></div>
<div style="left:119.00px;top:431.40px;width:37.80px;height:12.20px;background:#bbe1fa;border-radius:2.2px"></div>
<span class="ls" style="left:42.60px;top:433.50px;font-size:5.1px;line-height:7px;color:#444;font-weight:normal;">058-Z0PO7O4YTQ</span>
<span class="ls" style="left:120.80px;top:433.50px;font-size:5.1px;line-height:7px;color:#444;font-weight:normal;">1-1257 A</span>
<span class="ls" style="left:159.00px;top:433.50px;font-size:5.1px;line-height:7px;color:#444;font-weight:normal;">CE</span>
<span class="ls" style="left:175.00px;top:433.50px;font-size:5.1px;line-height:7px;color:#444;font-weight:normal;">2022-01-12</span>
<span class="ls" style="left:220.00px;top:433.50px;font-size:5.1px;line-height:7px;color:#444;font-weight:normal;">09:11 a.m.<svg style="position:static;display:inline-block;width:3.6px;height:3.8px;margin-left:1.3px;vertical-align:-0.5px" viewBox="0 0 7.2 7.6"><rect x="0.9" y="0.9" width="5.4" height="5.8" fill="none" stroke="#909090" stroke-width="0.9"/></svg></span>
<span class="ls" style="left:270.60px;top:433.50px;font-size:5.15px;line-height:7px;color:#444;font-weight:normal;">AGUIAR FLOREZ RAQUEL ROCIO</span>
<span class="ls" style="left:415.00px;top:433.50px;font-size:5.15px;line-height:7px;color:#444;font-weight:normal;">ENFERMERIA ONCOLOGICA</span>
<span class="ls" style="left:42.00px;top:445.50px;font-size:5.15px;line-height:7px;color:#444;font-weight:normal;">Componentes</span>
<svg style="left:526.4px;top:434.40px;width:6.4px;height:6.4px" viewBox="0 0 12.8 12.8"><defs><radialGradient id="gd4"><stop offset="0" stop-color="#1a1a1a"/><stop offset="0.45" stop-color="#333"/><stop offset="0.8" stop-color="#9a9a9a" stop-opacity="0.8"/><stop offset="1" stop-color="#ccc" stop-opacity="0"/></radialGradient></defs><circle cx="6.4" cy="6.6" r="4.6" fill="url(#gd4)"/></svg>
<div class="pbtn" style="left:543.60px;top:433.00px;width:26.20px;height:9.80px;"><span class="ls" style="left:6.7px;top:0.50px;line-height:7px;font-size:5.1px;color:#6262a8">Ver HC</span></div>
<svg style="left:546.40px;top:435.60px;width:3.4px;height:4.4px" viewBox="0 0 6.8 8.8"><rect x="0.7" y="1.3" width="5.4" height="6.2" fill="none" stroke="#9090c0" stroke-width="0.9"/></svg>
<div class="pbtn" style="left:572.20px;top:433.00px;width:27.40px;height:9.80px;"><span class="ls" style="left:5.8px;top:0.50px;line-height:7px;font-size:5.1px;color:#6262a8">Imprimir</span></div>
<svg style="left:574.20px;top:435.50px;width:3.6px;height:4.6px" viewBox="0 0 7.2 9.2"><path d="M2.2 3.6V1H5V3.6M1 7.4V3.8H6.2V7.4ZM2.2 7.4V8.4H5V7.4" fill="none" stroke="#8080bc" stroke-width="0.9"/></svg>
<div style="left:541.80px;top:453.80px;width:145.00px;height:5.20px;background:#f5f5f3"></div>
<div style="left:40.60px;top:454.40px;width:500.60px;height:4.20px;background:#fafafa;border:0.8px solid #dadada;border-radius:2.2px"></div>
<div style="left:40.60px;top:459.60px;width:646.00px;height:21.60px;background:#fbfbf9"></div>
<div style="left:118.00px;top:459.60px;width:0.80px;height:21.60px;background:#fff"></div>
<div style="left:157.20px;top:459.60px;width:0.80px;height:21.60px;background:#fff"></div>
<div style="left:172.40px;top:459.60px;width:0.80px;height:21.60px;background:#fff"></div>
<div style="left:216.60px;top:459.60px;width:0.80px;height:21.60px;background:#fff"></div>
<div style="left:267.60px;top:459.60px;width:0.80px;height:21.60px;background:#fff"></div>
<div style="left:413.00px;top:459.60px;width:0.80px;height:21.60px;background:#fff"></div>
<div style="left:525.20px;top:459.60px;width:0.80px;height:21.60px;background:#fff"></div>
<div style="left:541.00px;top:459.60px;width:0.80px;height:21.60px;background:#fff"></div>
<div style="left:40.60px;top:471.40px;width:646.00px;height:0.70px;background:#fff"></div>
<div style="left:40.60px;top:459.60px;width:77.00px;height:11.40px;background:#bbe1fa;border-radius:2.2px"></div>
<div style="left:119.00px;top:459.60px;width:37.80px;height:11.40px;background:#bbe1fa;border-radius:2.2px"></div>
<span class="ls" style="left:42.60px;top:461.50px;font-size:5.1px;line-height:7px;color:#444;font-weight:normal;">491-80AH7TLIUY</span>
<span class="ls" style="left:120.80px;top:461.50px;font-size:5.1px;line-height:7px;color:#444;font-weight:normal;">1-1257 C</span>
<span class="ls" style="left:159.00px;top:461.50px;font-size:5.1px;line-height:7px;color:#444;font-weight:normal;">CE</span>
<span class="ls" style="left:175.00px;top:461.50px;font-size:5.1px;line-height:7px;color:#444;font-weight:normal;">2021-12-16</span>
<span class="ls" style="left:220.00px;top:461.50px;font-size:5.1px;line-height:7px;color:#444;font-weight:normal;">2:57 p.m.<svg style="position:static;display:inline-block;width:3.6px;height:3.8px;margin-left:1.3px;vertical-align:-0.5px" viewBox="0 0 7.2 7.6"><rect x="0.9" y="0.9" width="5.4" height="5.8" fill="none" stroke="#909090" stroke-width="0.9"/></svg></span>
<span class="ls" style="left:270.60px;top:461.50px;font-size:5.15px;line-height:7px;color:#444;font-weight:normal;">GONZALEZ FLORES HECTOR ALIRIO</span>
<span class="ls" style="left:415.00px;top:461.50px;font-size:5.15px;line-height:7px;color:#444;font-weight:normal;">ONCOLOGIA CLINICA</span>
<span class="ls" style="left:42.00px;top:472.50px;font-size:5.15px;line-height:7px;color:#444;font-weight:normal;">Componentes</span>
<svg style="left:525.8px;top:460.80px;width:9.6px;height:9.6px" viewBox="0 0 19.2 19.2"><defs><radialGradient id="gr5"><stop offset="0" stop-color="#ff0000"/><stop offset="0.5" stop-color="#ff0a0a"/><stop offset="0.66" stop-color="#ff6a6a"/><stop offset="0.85" stop-color="#ffb4b4" stop-opacity="0.9"/><stop offset="1" stop-color="#ffd8d8" stop-opacity="0"/></radialGradient></defs><circle cx="9.6" cy="10.2" r="8.2" fill="url(#gr5)"/></svg>
<div style="left:541.80px;top:481.40px;width:145.00px;height:5.20px;background:#f5f5f3"></div>
<div style="left:40.60px;top:482.00px;width:500.60px;height:4.20px;background:#fafafa;border:0.8px solid #dadada;border-radius:2.2px"></div>
<div style="left:40.60px;top:487.40px;width:646.00px;height:22.20px;background:#fbfbf9"></div>
<div style="left:118.00px;top:487.40px;width:0.80px;height:22.20px;background:#fff"></div>
<div style="left:157.20px;top:487.40px;width:0.80px;height:22.20px;background:#fff"></div>
<div style="left:172.40px;top:487.40px;width:0.80px;height:22.20px;background:#fff"></div>
<div style="left:216.60px;top:487.40px;width:0.80px;height:22.20px;background:#fff"></div>
<div style="left:267.60px;top:487.40px;width:0.80px;height:22.20px;background:#fff"></div>
<div style="left:413.00px;top:487.40px;width:0.80px;height:22.20px;background:#fff"></div>
<div style="left:525.20px;top:487.40px;width:0.80px;height:22.20px;background:#fff"></div>
<div style="left:541.00px;top:487.40px;width:0.80px;height:22.20px;background:#fff"></div>
<div style="left:40.60px;top:500.00px;width:646.00px;height:0.70px;background:#fff"></div>
<div style="left:40.60px;top:487.40px;width:77.00px;height:12.20px;background:#bbe1fa;border-radius:2.2px"></div>
<div style="left:119.00px;top:487.40px;width:37.80px;height:12.20px;background:#bbe1fa;border-radius:2.2px"></div>
<span class="ls" style="left:42.60px;top:489.50px;font-size:5.1px;line-height:7px;color:#444;font-weight:normal;">058-VCTKTB3HLF</span>
<span class="ls" style="left:120.80px;top:489.50px;font-size:5.1px;line-height:7px;color:#444;font-weight:normal;">1-854 C</span>
<span class="ls" style="left:159.00px;top:489.50px;font-size:5.1px;line-height:7px;color:#444;font-weight:normal;">CE</span>
<span class="ls" style="left:175.00px;top:489.50px;font-size:5.1px;line-height:7px;color:#444;font-weight:normal;">2021-11-24</span>
<span class="ls" style="left:220.00px;top:489.50px;font-size:5.1px;line-height:7px;color:#444;font-weight:normal;">09:20 a.m.<svg style="position:static;display:inline-block;width:3.6px;height:3.8px;margin-left:1.3px;vertical-align:-0.5px" viewBox="0 0 7.2 7.6"><rect x="0.9" y="0.9" width="5.4" height="5.8" fill="none" stroke="#909090" stroke-width="0.9"/></svg></span>
<span class="ls" style="left:270.60px;top:489.50px;font-size:5.15px;line-height:7px;color:#444;font-weight:normal;">AGUIAR FLOREZ RAQUEL ROCIO</span>
<span class="ls" style="left:415.00px;top:489.50px;font-size:5.15px;line-height:7px;color:#444;font-weight:normal;">ENFERMERIA ONCOLOGICA</span>
<span class="ls" style="left:42.00px;top:501.50px;font-size:5.15px;line-height:7px;color:#444;font-weight:normal;">Componentes</span>
<svg style="left:525.8px;top:489.00px;width:9.6px;height:9.6px" viewBox="0 0 19.2 19.2"><defs><radialGradient id="gr6"><stop offset="0" stop-color="#ff0000"/><stop offset="0.5" stop-color="#ff0a0a"/><stop offset="0.66" stop-color="#ff6a6a"/><stop offset="0.85" stop-color="#ffb4b4" stop-opacity="0.9"/><stop offset="1" stop-color="#ffd8d8" stop-opacity="0"/></radialGradient></defs><circle cx="9.6" cy="10.2" r="8.2" fill="url(#gr6)"/></svg>
<div class="pbtn" style="left:543.60px;top:489.00px;width:26.20px;height:9.80px;"><span class="ls" style="left:6.7px;top:0.50px;line-height:7px;font-size:5.1px;color:#6262a8">Ver HC</span></div>
<svg style="left:546.40px;top:491.60px;width:3.4px;height:4.4px" viewBox="0 0 6.8 8.8"><rect x="0.7" y="1.3" width="5.4" height="6.2" fill="none" stroke="#9090c0" stroke-width="0.9"/></svg>
<div class="pbtn" style="left:572.20px;top:489.00px;width:27.40px;height:9.80px;"><span class="ls" style="left:5.8px;top:0.50px;line-height:7px;font-size:5.1px;color:#6262a8">Imprimir</span></div>
<svg style="left:574.20px;top:491.50px;width:3.6px;height:4.6px" viewBox="0 0 7.2 9.2"><path d="M2.2 3.6V1H5V3.6M1 7.4V3.8H6.2V7.4ZM2.2 7.4V8.4H5V7.4" fill="none" stroke="#8080bc" stroke-width="0.9"/></svg>
<div style="left:541.80px;top:509.80px;width:145.00px;height:5.20px;background:#f5f5f3"></div>
<div style="left:40.60px;top:510.40px;width:500.60px;height:4.20px;background:#fafafa;border:0.8px solid #dadada;border-radius:2.2px"></div>
<div style="left:40.60px;top:515.60px;width:646.00px;height:21.60px;background:#fbfbf9"></div>
<div style="left:118.00px;top:515.60px;width:0.80px;height:21.60px;background:#fff"></div>
<div style="left:157.20px;top:515.60px;width:0.80px;height:21.60px;background:#fff"></div>
<div style="left:172.40px;top:515.60px;width:0.80px;height:21.60px;background:#fff"></div>
<div style="left:216.60px;top:515.60px;width:0.80px;height:21.60px;background:#fff"></div>
<div style="left:267.60px;top:515.60px;width:0.80px;height:21.60px;background:#fff"></div>
<div style="left:413.00px;top:515.60px;width:0.80px;height:21.60px;background:#fff"></div>
<div style="left:525.20px;top:515.60px;width:0.80px;height:21.60px;background:#fff"></div>
<div style="left:541.00px;top:515.60px;width:0.80px;height:21.60px;background:#fff"></div>
<div style="left:40.60px;top:527.40px;width:646.00px;height:0.70px;background:#fff"></div>
<div style="left:40.60px;top:515.60px;width:77.00px;height:11.40px;background:#bbe1fa;border-radius:2.2px"></div>
<div style="left:119.00px;top:515.60px;width:37.80px;height:11.40px;background:#bbe1fa;border-radius:2.2px"></div>
<span class="ls" style="left:42.60px;top:517.50px;font-size:5.1px;line-height:7px;color:#444;font-weight:normal;">491-2YQFDVI5VJ</span>
<span class="ls" style="left:120.80px;top:517.50px;font-size:5.1px;line-height:7px;color:#444;font-weight:normal;">1-854 C</span>
<span class="ls" style="left:159.00px;top:517.50px;font-size:5.1px;line-height:7px;color:#444;font-weight:normal;">CE</span>
<span class="ls" style="left:175.00px;top:517.50px;font-size:5.1px;line-height:7px;color:#444;font-weight:normal;">2021-11-17</span>
<span class="ls" style="left:220.00px;top:517.50px;font-size:5.1px;line-height:7px;color:#444;font-weight:normal;">1:49 p.m.<svg style="position:static;display:inline-block;width:3.6px;height:3.8px;margin-left:1.3px;vertical-align:-0.5px" viewBox="0 0 7.2 7.6"><rect x="0.9" y="0.9" width="5.4" height="5.8" fill="none" stroke="#909090" stroke-width="0.9"/></svg></span>
<span class="ls" style="left:270.60px;top:517.50px;font-size:5.15px;line-height:7px;color:#444;font-weight:normal;">GONZALEZ FLORES HECTOR ALIRIO</span>
<span class="ls" style="left:415.00px;top:517.50px;font-size:5.15px;line-height:7px;color:#444;font-weight:normal;">ONCOLOGIA CLINICA</span>
<span class="ls" style="left:42.00px;top:528.50px;font-size:5.15px;line-height:7px;color:#444;font-weight:normal;">Componentes</span>
<svg style="left:525.8px;top:516.80px;width:9.6px;height:9.6px" viewBox="0 0 19.2 19.2"><defs><radialGradient id="gr7"><stop offset="0" stop-color="#ff0000"/><stop offset="0.5" stop-color="#ff0a0a"/><stop offset="0.66" stop-color="#ff6a6a"/><stop offset="0.85" stop-color="#ffb4b4" stop-opacity="0.9"/><stop offset="1" stop-color="#ffd8d8" stop-opacity="0"/></radialGradient></defs><circle cx="9.6" cy="10.2" r="8.2" fill="url(#gr7)"/></svg>
<div style="left:541.80px;top:537.40px;width:145.00px;height:5.20px;background:#f5f5f3"></div>
<div style="left:40.60px;top:538.00px;width:500.60px;height:4.20px;background:#fafafa;border:0.8px solid #dadada;border-radius:2.2px"></div>
<div style="left:40.60px;top:543.40px;width:646.00px;height:22.20px;background:#fbfbf9"></div>
<div style="left:118.00px;top:543.40px;width:0.80px;height:22.20px;background:#fff"></div>
<div style="left:157.20px;top:543.40px;width:0.80px;height:22.20px;background:#fff"></div>
<div style="left:172.40px;top:543.40px;width:0.80px;height:22.20px;background:#fff"></div>
<div style="left:216.60px;top:543.40px;width:0.80px;height:22.20px;background:#fff"></div>
<div style="left:267.60px;top:543.40px;width:0.80px;height:22.20px;background:#fff"></div>
<div style="left:413.00px;top:543.40px;width:0.80px;height:22.20px;background:#fff"></div>
<div style="left:525.20px;top:543.40px;width:0.80px;height:22.20px;background:#fff"></div>
<div style="left:541.00px;top:543.40px;width:0.80px;height:22.20px;background:#fff"></div>
<div style="left:40.60px;top:556.00px;width:646.00px;height:0.70px;background:#fff"></div>
<div style="left:40.60px;top:543.40px;width:77.00px;height:12.20px;background:#bbe1fa;border-radius:2.2px"></div>
<div style="left:119.00px;top:543.40px;width:37.80px;height:12.20px;background:#bbe1fa;border-radius:2.2px"></div>
<span class="ls" style="left:42.60px;top:545.50px;font-size:5.1px;line-height:7px;color:#444;font-weight:normal;">058-DGXLZOBTS3</span>
<span class="ls" style="left:120.80px;top:545.50px;font-size:5.1px;line-height:7px;color:#444;font-weight:normal;">1-211 C</span>
<span class="ls" style="left:159.00px;top:545.50px;font-size:5.1px;line-height:7px;color:#444;font-weight:normal;">CE</span>
<span class="ls" style="left:175.00px;top:545.50px;font-size:5.1px;line-height:7px;color:#444;font-weight:normal;">2021-10-21</span>
<span class="ls" style="left:220.00px;top:545.50px;font-size:5.1px;line-height:7px;color:#444;font-weight:normal;">09:17 a.m.<svg style="position:static;display:inline-block;width:3.6px;height:3.8px;margin-left:1.3px;vertical-align:-0.5px" viewBox="0 0 7.2 7.6"><rect x="0.9" y="0.9" width="5.4" height="5.8" fill="none" stroke="#909090" stroke-width="0.9"/></svg></span>
<span class="ls" style="left:270.60px;top:545.50px;font-size:5.15px;line-height:7px;color:#444;font-weight:normal;">AGUIAR FLOREZ RAQUEL ROCIO</span>
<span class="ls" style="left:415.00px;top:545.50px;font-size:5.15px;line-height:7px;color:#444;font-weight:normal;">ENFERMERIA ONCOLOGICA</span>
<span class="ls" style="left:42.00px;top:557.50px;font-size:5.15px;line-height:7px;color:#444;font-weight:normal;">Componentes</span>
<svg style="left:525.8px;top:545.00px;width:9.6px;height:9.6px" viewBox="0 0 19.2 19.2"><defs><radialGradient id="gr8"><stop offset="0" stop-color="#ff0000"/><stop offset="0.5" stop-color="#ff0a0a"/><stop offset="0.66" stop-color="#ff6a6a"/><stop offset="0.85" stop-color="#ffb4b4" stop-opacity="0.9"/><stop offset="1" stop-color="#ffd8d8" stop-opacity="0"/></radialGradient></defs><circle cx="9.6" cy="10.2" r="8.2" fill="url(#gr8)"/></svg>
<div class="pbtn" style="left:543.60px;top:545.00px;width:26.20px;height:9.80px;"><span class="ls" style="left:6.7px;top:0.50px;line-height:7px;font-size:5.1px;color:#6262a8">Ver HC</span></div>
<svg style="left:546.40px;top:547.60px;width:3.4px;height:4.4px" viewBox="0 0 6.8 8.8"><rect x="0.7" y="1.3" width="5.4" height="6.2" fill="none" stroke="#9090c0" stroke-width="0.9"/></svg>
<div class="pbtn" style="left:572.20px;top:545.00px;width:27.40px;height:9.80px;"><span class="ls" style="left:5.8px;top:0.50px;line-height:7px;font-size:5.1px;color:#6262a8">Imprimir</span></div>
<svg style="left:574.20px;top:547.50px;width:3.6px;height:4.6px" viewBox="0 0 7.2 9.2"><path d="M2.2 3.6V1H5V3.6M1 7.4V3.8H6.2V7.4ZM2.2 7.4V8.4H5V7.4" fill="none" stroke="#8080bc" stroke-width="0.9"/></svg>
<div style="left:541.80px;top:565.80px;width:145.00px;height:5.20px;background:#f5f5f3"></div>
<div style="left:40.60px;top:566.40px;width:500.60px;height:4.20px;background:#fafafa;border:0.8px solid #dadada;border-radius:2.2px"></div>
<div style="left:40.60px;top:571.60px;width:646.00px;height:21.60px;background:#fbfbf9"></div>
<div style="left:118.00px;top:571.60px;width:0.80px;height:21.60px;background:#fff"></div>
<div style="left:157.20px;top:571.60px;width:0.80px;height:21.60px;background:#fff"></div>
<div style="left:172.40px;top:571.60px;width:0.80px;height:21.60px;background:#fff"></div>
<div style="left:216.60px;top:571.60px;width:0.80px;height:21.60px;background:#fff"></div>
<div style="left:267.60px;top:571.60px;width:0.80px;height:21.60px;background:#fff"></div>
<div style="left:413.00px;top:571.60px;width:0.80px;height:21.60px;background:#fff"></div>
<div style="left:525.20px;top:571.60px;width:0.80px;height:21.60px;background:#fff"></div>
<div style="left:541.00px;top:571.60px;width:0.80px;height:21.60px;background:#fff"></div>
<div style="left:40.60px;top:583.40px;width:646.00px;height:0.70px;background:#fff"></div>
<div style="left:40.60px;top:571.60px;width:77.00px;height:11.40px;background:#bbe1fa;border-radius:2.2px"></div>
<div style="left:119.00px;top:571.60px;width:37.80px;height:11.40px;background:#bbe1fa;border-radius:2.2px"></div>
<span class="ls" style="left:42.60px;top:573.50px;font-size:5.1px;line-height:7px;color:#444;font-weight:normal;">491-SE3ZUITYBY</span>
<span class="ls" style="left:120.80px;top:573.50px;font-size:5.1px;line-height:7px;color:#444;font-weight:normal;">1-211 C</span>
<span class="ls" style="left:159.00px;top:573.50px;font-size:5.1px;line-height:7px;color:#444;font-weight:normal;">CE</span>
<span class="ls" style="left:175.00px;top:573.50px;font-size:5.1px;line-height:7px;color:#444;font-weight:normal;">2021-10-07</span>
<span class="ls" style="left:220.00px;top:573.50px;font-size:5.1px;line-height:7px;color:#444;font-weight:normal;">2:39 p.m.<svg style="position:static;display:inline-block;width:3.6px;height:3.8px;margin-left:1.3px;vertical-align:-0.5px" viewBox="0 0 7.2 7.6"><rect x="0.9" y="0.9" width="5.4" height="5.8" fill="none" stroke="#909090" stroke-width="0.9"/></svg></span>
<span class="ls" style="left:270.60px;top:573.50px;font-size:5.15px;line-height:7px;color:#444;font-weight:normal;">GONZALEZ FLORES HECTOR ALIRIO</span>
<span class="ls" style="left:415.00px;top:573.50px;font-size:5.15px;line-height:7px;color:#444;font-weight:normal;">ONCOLOGIA CLINICA</span>
<span class="ls" style="left:42.00px;top:584.50px;font-size:5.15px;line-height:7px;color:#444;font-weight:normal;">Componentes</span>
<svg style="left:525.8px;top:572.80px;width:9.6px;height:9.6px" viewBox="0 0 19.2 19.2"><defs><radialGradient id="gr9"><stop offset="0" stop-color="#ff0000"/><stop offset="0.5" stop-color="#ff0a0a"/><stop offset="0.66" stop-color="#ff6a6a"/><stop offset="0.85" stop-color="#ffb4b4" stop-opacity="0.9"/><stop offset="1" stop-color="#ffd8d8" stop-opacity="0"/></radialGradient></defs><circle cx="9.6" cy="10.2" r="8.2" fill="url(#gr9)"/></svg>
<div style="left:120.6px;top:308px;width:30px;height:9.2px;background:#0e5f90;border:0.6px solid #0b5482"><span class="ls" style="left:6.4px;top:0;font-size:5.1px;line-height:7.6px;color:#fff">Nota Enf</span><svg style="left:2.2px;top:1.6px;width:3.4px;height:4.4px" viewBox="0 0 6.8 8.8"><rect x="0.9" y="0.9" width="5" height="7" fill="none" stroke="#bfe0f4" stroke-width="0.9"/></svg></div>
<div class="bbtn" style="left:152.00px;top:308.00px;width:31.80px;height:9.40px;"><span class="ls" style="left:6.6px;top:-0.50px;line-height:7px;font-size:5.1px;color:#5a5aa2">S Vitales</span></div>
<div style="left:181.90px;top:307.20px;width:2.00px;height:10.80px;background:#2a66ea"></div>
<svg style="left:154.8px;top:310px;width:3.4px;height:4.4px" viewBox="0 0 6.8 8.8"><rect x="0.7" y="1.3" width="5.4" height="6.2" fill="none" stroke="#9090c0" stroke-width="0.9"/></svg>
<div class="bbtn" style="left:185.00px;top:308.00px;width:41.60px;height:9.40px;"><span class="ls" style="left:6.6px;top:-0.50px;line-height:7px;font-size:5.1px;color:#5a5aa2">Aplicación Md</span></div>
<div style="left:224.70px;top:307.20px;width:2.00px;height:10.80px;background:#2a66ea"></div>
<svg style="left:187.8px;top:310px;width:3.4px;height:4.4px" viewBox="0 0 6.8 8.8"><rect x="0.7" y="1.3" width="5.4" height="6.2" fill="none" stroke="#9090c0" stroke-width="0.9"/></svg>
<div class="bbtn" style="left:228.00px;top:308.00px;width:35.20px;height:9.40px;"><span class="ls" style="left:6.6px;top:-0.50px;line-height:7px;font-size:5.1px;color:#5a5aa2">Funciones</span></div>
<div style="left:261.30px;top:307.20px;width:2.00px;height:10.80px;background:#2a66ea"></div>
<svg style="left:230.8px;top:310px;width:3.4px;height:4.4px" viewBox="0 0 6.8 8.8"><rect x="0.7" y="1.3" width="5.4" height="6.2" fill="none" stroke="#9090c0" stroke-width="0.9"/></svg>
<div style="left:0.00px;top:581.00px;width:750.00px;height:19.00px;background:#fff"></div>
</div>
</body>
</html>
